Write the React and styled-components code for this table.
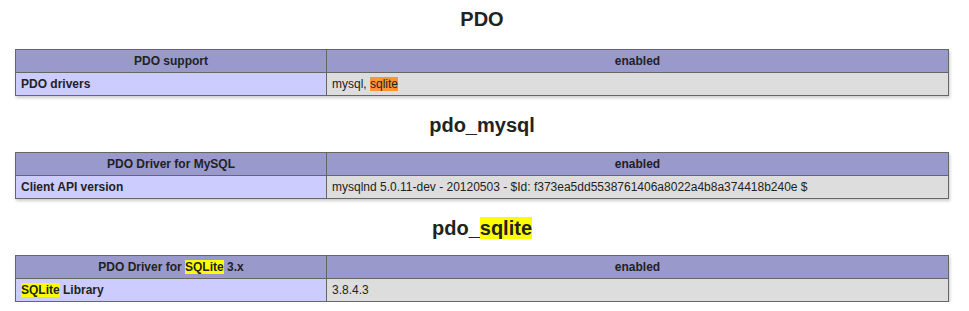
import React from "react";
import styled, { createGlobalStyle } from "styled-components";

const Global = createGlobalStyle`
  html, body { margin: 0; padding: 0; background: #fff; }
  body { color: #222; font-family: "Liberation Sans", Arial, sans-serif; }
`;

const Page = styled.div`
  width: 934px;
  padding: 8px 0 0 15px;
`;

const Section = styled.section`
  display: flex;
  flex-direction: column;
  & + & { margin-top: 18px; }
`;

const Heading = styled.h2`
  margin: 0 0 ${(p) => (p.$first ? 18 : 15)}px;
  font-size: 20px;
  line-height: 23px;
  font-weight: bold;
  text-align: center;
  color: #222;
`;

const Table = styled.table`
  width: 934px;
  border-collapse: collapse;
  table-layout: fixed;
  box-shadow: 1px 2px 3px #ccc;
`;

const Cell = styled.td`
  border: 1px solid #666;
  padding: 4px 5px;
  font-size: 12px;
  line-height: 14px;
  color: #222;
  vertical-align: baseline;
  text-align: left;
  background: #ddd;
`;

const Label = styled(Cell)`
  width: 300px;
  background: #ccf;
  font-weight: bold;
`;

const Head = styled(Cell).attrs({ as: "th" })`
  background: #99c;
  font-weight: bold;
  text-align: center;
`;

const HeadFirst = styled(Head)`
  width: 300px;
`;

const Hit = styled.mark`
  background: ${(p) => (p.$active ? "#ff9632" : "#ffff00")};
  color: inherit;
  padding: 0;
`;

const sections = [
  {
    title: "PDO",
    head: ["PDO support", "enabled"],
    row: ["PDO drivers", <>mysql, <Hit $active>sqlite</Hit></>],
  },
  {
    title: "pdo_mysql",
    head: ["PDO Driver for MySQL", "enabled"],
    row: [
      "Client API version",
      "mysqlnd 5.0.11-dev - 20120503 - $Id: f373ea5dd5538761406a8022a4b8a374418b240e $",
    ],
  },
  {
    title: <>pdo_<Hit>sqlite</Hit></>,
    head: [<>PDO Driver for <Hit>SQLite</Hit> 3.x</>, "enabled"],
    row: [<><Hit>SQLite</Hit> Library</>, "3.8.4.3"],
  },
];

export default function App() {
  return (
    <>
      <Global />
      <Page>
        {sections.map((s, i) => (
          <Section key={i}>
            <Heading $first={i === 0}>{s.title}</Heading>
            <Table>
              <tbody>
                <tr>
                  <HeadFirst>{s.head[0]}</HeadFirst>
                  <Head>{s.head[1]}</Head>
                </tr>
                <tr>
                  <Label>{s.row[0]}</Label>
                  <Cell>{s.row[1]}</Cell>
                </tr>
              </tbody>
            </Table>
          </Section>
        ))}
      </Page>
    </>
  );
}
